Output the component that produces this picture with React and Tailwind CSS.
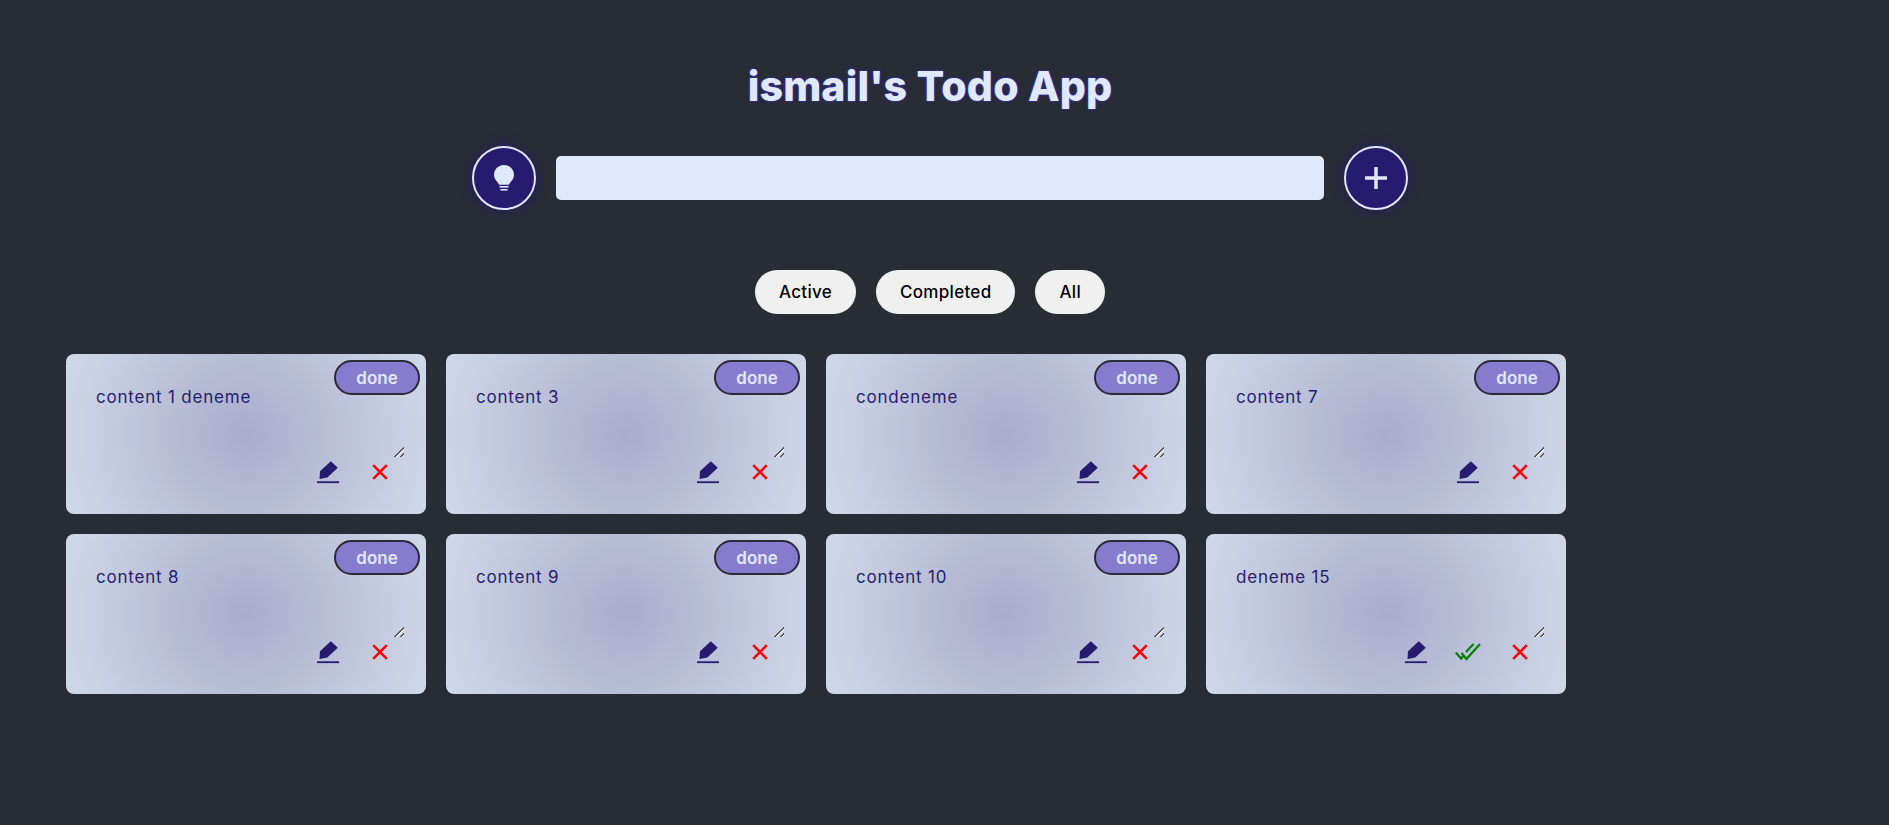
import React from "react";

const todos = [
    { id: 1, text: "content 1 deneme", done: true },
    { id: 3, text: "content 3", done: true },
    { id: 4, text: "condeneme", done: true },
    { id: 7, text: "content 7", done: true },
    { id: 8, text: "content 8", done: true },
    { id: 9, text: "content 9", done: true },
    { id: 10, text: "content 10", done: true },
    { id: 15, text: "deneme 15", done: false },
];

const filters = ["Active", "Completed", "All"];

const PenIcon = () => (
    <svg width="22" height="23" viewBox="0 0 22 23" fill="#261b6e">
        <path d="M2.500 18 L3 10.200 L13.800 0.300 L20.800 6.700 L10.300 16.500 Z" />
        <rect x="0" y="20.300" width="22" height="1.800" />
    </svg>
);

const CheckIcon = () => (
    <svg width="26" height="18" viewBox="0 0 26 18" fill="none" stroke="#008000" strokeWidth="2.200">
        <path d="M0.700 9.500 L6.200 15.500 L8 13.500" />
        <path d="M6.500 10 L11.500 16 L25 1" />
        <path d="M11 9 L18.500 1" />
    </svg>
);

const CrossIcon = () => (
    <svg width="16" height="16" viewBox="0 0 16 16" fill="none" stroke="#ff0000" strokeWidth="2.600">
        <path d="M1.200 1.200 L14.800 14.800 M14.800 1.200 L1.200 14.800" />
    </svg>
);

const BulbIcon = () => (
    <svg width="20" height="26" viewBox="0 0 20 26" fill="#e0e8fc">
        <path d="M10 0 C15.500 0 20 4.300 20 9.800 C20 13.300 18 15.500 16.500 17.200 C15.600 18.200 15.200 19 15 19.800 L5 19.800 C4.800 19 4.400 18.200 3.500 17.200 C2 15.500 0 13.300 0 9.800 C0 4.300 4.500 0 10 0 Z" />
        <rect x="5.500" y="21" width="9" height="1.600" />
        <rect x="6.500" y="24" width="7" height="1.600" />
    </svg>
);

const PlusIcon = () => (
    <svg width="24" height="24" viewBox="0 0 24 24" stroke="#e0e8fc" strokeWidth="3.500">
        <path d="M12 1 V23 M1 12 H23" />
    </svg>
);

const RoundButton = ({ children }) => (
    <button className="w-16 h-16 shrink-0 rounded-full bg-[#261b6e] border-2 border-[#e0e8fc] shadow-[0_0_12px_#261b6e] flex items-center justify-center">
        {children}
    </button>
);

const TodoCard = ({ todo }) => (
    <div className="relative w-[360px] h-40 rounded-lg bg-[radial-gradient(circle,#a9accb,#d0d9e8)] pl-[30px] pr-5 pt-[30px]">
        {todo.done && (
            <button className="absolute top-1.5 right-1.5 w-[86px] h-[35px] pt-0.5 rounded-[18px] bg-[#877bce] border-2 border-[#2b2b38] text-[#e0e8fc] text-[17px] font-semibold flex items-center justify-center">
                done
            </button>
        )}
        <textarea
            readOnly
            defaultValue={todo.text}
            className="block w-[308px] h-[73px] p-0 bg-transparent resize outline-none text-[#261b6e] text-[17px] leading-[26px] tracking-[0.8px] [&::-webkit-resizer]:bg-[linear-gradient(135deg,transparent_14px,#555_14px,#555_15.500px,#ffffffaa_15.500px,#ffffffaa_16.500px,transparent_16.500px,transparent_18px,#555_18px,#555_19.500px,#ffffffaa_19.500px,#ffffffaa_20.500px,transparent_20.500px)]"
        />
        <div className="flex justify-end items-center h-[26px] mt-0.5">
            <button className="w-[52px] h-[26px] flex items-center justify-center"><PenIcon /></button>
            {!todo.done && (
                <button className="w-[52px] h-[26px] flex items-center justify-center"><CheckIcon /></button>
            )}
            <button className="w-[52px] h-[26px] flex items-center justify-center"><CrossIcon /></button>
        </div>
    </div>
);

export default function App() {
    return (
        <div className="min-h-[825px] bg-[#282c35] overflow-hidden font-['Inter',sans-serif]">
            <div className="w-[1860px] pt-[58px]">
                <h1 className="text-center text-[41px] leading-[56px] font-extrabold tracking-[0.2px] text-[#e0e8fc] [text-shadow:0_0_3px_#3b2fb0,0_0_2px_#3b2fb0,0_0_1px_#3b2fb0]">
                    ismail's Todo App
                </h1>
                <div className="flex justify-center items-center gap-5 mt-8 pl-5">
                    <RoundButton><BulbIcon /></RoundButton>
                    <input className="w-[768px] h-11 rounded-[5px] bg-[#e0e8fc] outline-none" />
                    <RoundButton><PlusIcon /></RoundButton>
                </div>
                <div className="flex justify-center gap-5 mt-[60px]">
                    {filters.map((f) => (
                        <button
                            key={f}
                            className="h-11 pt-0.5 px-6 rounded-full bg-[#f0f0f0] text-black text-[17px] font-[450] tracking-[0.3px]"
                        >
                            {f}
                        </button>
                    ))}
                </div>
                <div className="flex flex-wrap gap-5 w-[1520px] ml-[66px] mt-10">
                    {todos.map((todo) => (
                        <TodoCard key={todo.id} todo={todo} />
                    ))}
                </div>
            </div>
        </div>
    );
}
